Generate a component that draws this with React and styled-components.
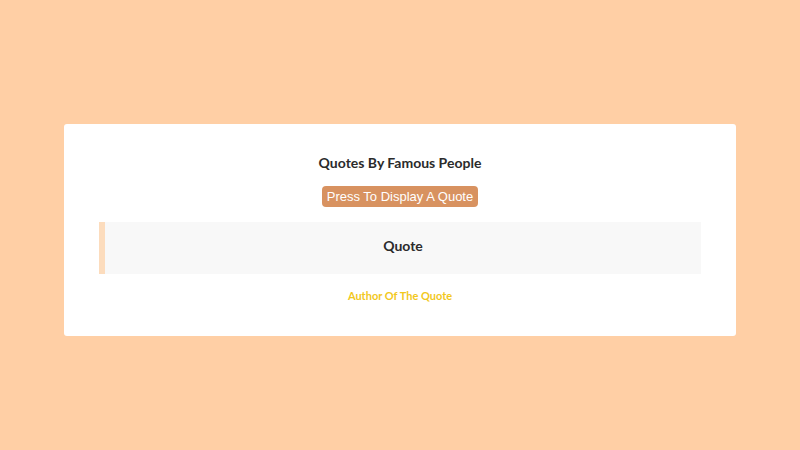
import React from 'react';
import styled, { createGlobalStyle } from 'styled-components';

const GlobalStyle = createGlobalStyle`
  html, body {
    margin: 0;
    padding: 0;
    background: #ffcfa5;
    font-family: Lato, "Open Sans", sans-serif;
  }
`;

const Page = styled.div`
  width: 800px;
  height: 450px;
  box-sizing: border-box;
  padding-top: 124px;
  display: flex;
  justify-content: center;
  align-items: flex-start;
`;

const Card = styled.div`
  width: 672px;
  height: 212px;
  box-sizing: border-box;
  background: #ffffff;
  border-radius: 3px;
  padding: 28px 35px 0;
  display: flex;
  flex-direction: column;
  align-items: center;
`;

const Title = styled.h1`
  margin: 0;
  font-size: 14px;
  font-weight: 700;
  color: #2b2b2b;
  line-height: 22px;
`;

const QuoteButton = styled.button`
  margin-top: 12px;
  height: 21px;
  padding: 0 5px;
  border: none;
  border-radius: 4px;
  background: #d89260;
  color: #ffffff;
  font-family: "Liberation Sans", Arial, sans-serif;
  font-size: 13px;
  line-height: 21px;
  cursor: pointer;
`;

const QuoteBox = styled.div`
  margin-top: 15px;
  align-self: stretch;
  height: 52px;
  box-sizing: border-box;
  padding-bottom: 6px;
  background: #f8f8f8;
  border-left: 6px solid #fcdcbd;
  display: flex;
  align-items: center;
  justify-content: center;
`;

const QuoteText = styled.p`
  margin: 0;
  font-size: 14px;
  font-weight: 700;
  color: #2b2b2b;
`;

const Author = styled.p`
  margin: 15px 0 0;
  font-size: 11px;
  font-weight: 700;
  color: #f2c81c;
`;

export default function App() {
  return (
    <>
      <GlobalStyle />
      <Page>
        <Card>
          <Title>Quotes By Famous People</Title>
          <QuoteButton>Press To Display A Quote</QuoteButton>
          <QuoteBox>
            <QuoteText>Quote</QuoteText>
          </QuoteBox>
          <Author>Author Of The Quote</Author>
        </Card>
      </Page>
    </>
  );
}
